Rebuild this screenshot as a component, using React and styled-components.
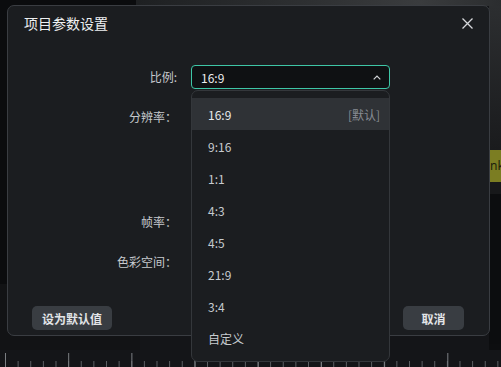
import React from "react";
import styled, { createGlobalStyle } from "styled-components";

const GlobalStyle = createGlobalStyle`
  html, body {
    margin: 0;
    padding: 0;
    background: #0b0c0e;
  }
  * {
    box-sizing: border-box;
  }
`;

const ratios = ["16:9", "9:16", "1:1", "4:3", "4:5", "21:9", "3:4", "自定义"];

const App = () => {
  return (
    <>
      <GlobalStyle />
      <Stage>
        <TopStrip />
        <Middle>
          <LeftGap />
          <CenterGap />
          <SidePanel>
            <PanelTop />
            <Clip>nk</Clip>
            <PanelRow />
            <PanelRow $dark />
            <PanelBottom />
          </SidePanel>
        </Middle>
        <Ruler />

        <Dialog>
          <Header>
            <Title>项目参数设置</Title>
            <CloseButton aria-label="close">
              <svg width="11" height="11" viewBox="0 0 11 11">
                <path d="M0.5 0.5 L10.5 10.5 M10.5 0.5 L0.5 10.5" stroke="#d6d8db" strokeWidth="1.3" />
              </svg>
            </CloseButton>
          </Header>

          <Form>
            <Label>比例:</Label>
            <SelectWrap>
              <Select>
                <span>16:9</span>
                <svg width="8" height="5" viewBox="0 0 8 5">
                  <path d="M0.7 4.3 L4 1 L7.3 4.3" fill="none" stroke="#d3d6d9" strokeWidth="1.2" />
                </svg>
              </Select>
              <Menu>
                {ratios.map((r, i) => (
                  <Item key={r} $active={i === 0}>
                    <span>{r}</span>
                    {i === 0 && <Hint>[默认]</Hint>}
                  </Item>
                ))}
              </Menu>
            </SelectWrap>

            <Label>分辨率：</Label>
            <div />
            <Spacer />
            <Spacer />

            <Label>帧率：</Label>
            <div />

            <Label>色彩空间：</Label>
            <div />
          </Form>

          <Footer>
            <Button>设为默认值</Button>
            <Button $wide>取消</Button>
          </Footer>
        </Dialog>
      </Stage>
    </>
  );
};

const Stage = styled.div`
  position: relative;
  width: 501px;
  height: 367px;
  overflow: hidden;
  display: grid;
  grid-template-rows: 6px 1fr 17px;
  background: #0b0c0e;
  font-family: "Noto Sans CJK SC", "Noto Sans", sans-serif;
`;

const TopStrip = styled.div`
  background: linear-gradient(90deg, #0b0c0e 0, #0b0c0e 136px, #1e2022 136px, #2d2f31 300px, #3a3c3e 420px, #2b2d2f 501px);
`;

const Middle = styled.div`
  display: grid;
  grid-template-columns: 140px 1fr 12px;
  background: #0d0e10;
`;

const LeftGap = styled.div`
  background: linear-gradient(180deg, #0b0c0e 0, #0b0c0e 278px, #121315 278px);
`;

const CenterGap = styled.div`
  background: #141518;
`;

const SidePanel = styled.div`
  display: grid;
  grid-template-rows: 144px 32px 12px 150px 1fr;
  background: #111214;
`;

const PanelTop = styled.div`
  background: linear-gradient(180deg, #2c2e30, #1a1b1d);
`;

const Clip = styled.div`
  background: #7b7d22;
  color: #1c1d0c;
  font-family: "Noto Sans", sans-serif;
  font-size: 12px;
  line-height: 32px;
  text-indent: 1px;
  white-space: nowrap;
`;

const PanelRow = styled.div`
  background: ${(p) => (p.$dark ? "#0c0d0f" : "#17181a")};
`;

const PanelBottom = styled.div`
  background: #0d0e10;
`;

const Ruler = styled.div`
  background-color: #141518;
  background-image:
    linear-gradient(90deg, #7c7f83 1px, transparent 1px),
    linear-gradient(90deg, #5c5f63 1px, transparent 1px);
  background-size: 63.2px 14px, 12.64px 6px;
  background-position: 5px 100%, 5px 100%;
  background-repeat: repeat-x, repeat-x;
`;

const Dialog = styled.div`
  position: absolute;
  left: 7px;
  top: 5px;
  width: 483px;
  height: 331px;
  background: #1b1d20;
  border: 1px solid #3a3d42;
  border-radius: 7px;
  display: flex;
  flex-direction: column;
`;

const Header = styled.div`
  display: flex;
  align-items: center;
  justify-content: space-between;
  height: 34px;
  padding: 0 15px 0 16px;
`;

const Title = styled.div`
  color: #eef0f2;
  font-size: 14px;
`;

const CloseButton = styled.button`
  display: flex;
  align-items: center;
  justify-content: center;
  width: 14px;
  height: 14px;
  padding: 0;
  border: none;
  background: transparent;
`;

const Form = styled.div`
  display: grid;
  grid-template-columns: 169px 199px;
  grid-template-rows: 24px 24px 49px 24px 24px;
  column-gap: 14px;
  row-gap: 16px;
  margin-top: 25px;
`;

const Label = styled.div`
  text-align: right;
  color: #c6c9ce;
  font-size: 12px;
  line-height: 24px;
`;

const Spacer = styled.div``;

const SelectWrap = styled.div`
  position: relative;
`;

const Select = styled.div`
  height: 24px;
  display: flex;
  align-items: center;
  justify-content: space-between;
  padding: 0 8px 0 9px;
  background: #0f1113;
  border: 1px solid #3ec6a6;
  border-radius: 4px;
  color: #eceef0;
  font-size: 12px;
`;

const Menu = styled.div`
  position: absolute;
  top: 25px;
  left: 0;
  width: 199px;
  height: 272px;
  padding: 7px 0 8px;
  background: #1b1d20;
  border: 1px solid #34373b;
  border-radius: 7px;
  z-index: 2;
`;

const Item = styled.div`
  height: 32px;
  display: flex;
  align-items: center;
  justify-content: space-between;
  padding: 0 9px 0 16px;
  font-size: 12px;
  color: ${(p) => (p.$active ? "#e8eaec" : "#c7cbcf")};
  background: ${(p) => (p.$active ? "#2f3236" : "transparent")};
`;

const Hint = styled.span`
  color: #878c93;
`;

const Footer = styled.div`
  margin-top: auto;
  display: flex;
  justify-content: space-between;
  padding: 0 25px 5px 24px;
`;

const Button = styled.button`
  height: 24px;
  min-width: ${(p) => (p.$wide ? "61px" : "79px")};
  padding: 0 10px;
  background: #393d42;
  border: none;
  border-radius: 5px;
  color: #e3e5e8;
  font-family: "Noto Sans CJK SC", "Noto Sans", sans-serif;
  font-size: 12px;
  font-weight: 700;
`;

export default App;
